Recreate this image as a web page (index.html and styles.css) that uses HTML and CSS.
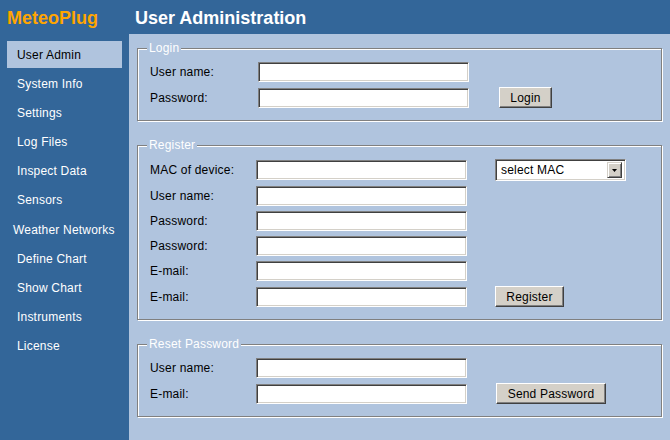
FILE: index.html
```html
<!DOCTYPE html>
<html lang="en">
<head>
<meta charset="utf-8">
<title>MeteoPlug - User Administration</title>
<link rel="stylesheet" href="styles.css">
</head>
<body>
<div class="page">
  <aside class="sidebar">
    <div class="brand">MeteoPlug</div>
    <nav class="nav">
      <a class="nav-item active">User Admin</a>
      <a class="nav-item">System Info</a>
      <a class="nav-item">Settings</a>
      <a class="nav-item">Log Files</a>
      <a class="nav-item">Inspect Data</a>
      <a class="nav-item">Sensors</a>
      <a class="nav-item wide">Weather Networks</a>
      <a class="nav-item">Define Chart</a>
      <a class="nav-item">Show Chart</a>
      <a class="nav-item">Instruments</a>
      <a class="nav-item">License</a>
    </nav>
  </aside>
  <main class="main">
    <header class="topbar"><h1 class="title">User Administration</h1></header>
    <div class="content">
      <fieldset class="box">
        <legend class="box-title">Login</legend>
        <div class="form form-login">
          <span class="lbl">User name:</span><span class="field"></span><span></span>
          <span class="lbl">Password:</span><span class="field"></span><span class="action"><span class="btn btn-login">Login</span></span>
        </div>
      </fieldset>
      <fieldset class="box">
        <legend class="box-title">Register</legend>
        <div class="form form-reg">
          <span class="lbl">MAC of device:</span><span class="field"></span>
          <span class="action"><span class="select"><span class="select-text">select MAC</span><span class="select-btn"><svg width="5" height="3" viewBox="0 0 5 3"><polygon points="0,0 5,0 2.5,3" fill="#000"/></svg></span></span></span>
          <span class="lbl">User name:</span><span class="field"></span><span></span>
          <span class="lbl">Password:</span><span class="field"></span><span></span>
          <span class="lbl">Password:</span><span class="field"></span><span></span>
          <span class="lbl">E-mail:</span><span class="field"></span><span></span>
          <span class="lbl">E-mail:</span><span class="field"></span><span class="action"><span class="btn btn-reg">Register</span></span>
        </div>
      </fieldset>
      <fieldset class="box">
        <legend class="box-title">Reset Password</legend>
        <div class="form form-reset">
          <span class="lbl">User name:</span><span class="field"></span><span></span>
          <span class="lbl">E-mail:</span><span class="field"></span><span class="action"><span class="btn btn-send">Send Password</span></span>
        </div>
      </fieldset>
    </div>
  </main>
</div>
</body>
</html>
```
FILE: styles.css
```css
* { box-sizing: border-box; }
html, body { margin: 0; height: 100%; }
body {
  font-family: "Liberation Sans", Arial, sans-serif;
  font-size: 12px;
  letter-spacing: 0.2px;
  background: #b0c4de;
  color: #000;
}
.page {
  display: grid;
  grid-template-columns: 129px 1fr;
  height: 440px;
  overflow: hidden;
}
.sidebar { background: #336699; }
.brand {
  height: 34px;
  padding: 8px 0 0 7px;
  font-size: 18px;
  font-weight: bold;
  line-height: 21px;
  letter-spacing: 0;
  color: #ffa500;
}
.nav {
  display: flex;
  flex-direction: column;
  gap: 2.1px;
  padding: 7px 7px 0;
}
.nav-item {
  height: 27px;
  padding-top: 2px;
  line-height: 25px;
  padding-left: 10px;
  color: #fff;
  text-decoration: none;
  white-space: nowrap;
}
.nav-item.active { background: #b0c4de; color: #000; }
.nav-item.wide { padding-left: 6px; }

.main { background: #b0c4de; display: flex; flex-direction: column; }
.topbar {
  height: 34px;
  background: #336699;
  padding: 8px 0 0 6px;
}
.title {
  margin: 0;
  font-size: 18px;
  line-height: 21px;
  font-weight: bold;
  letter-spacing: 0;
  color: #fff;
}
.content {
  padding: 6px 8px 0 8px;
  display: flex;
  flex-direction: column;
  gap: 16px;
}
.box {
  margin: 0;
  min-width: 0;
  border: 1px solid #808080;
  box-shadow: 1px 1px 0 #fff, inset 1px 1px 0 #fff;
  padding: 6px 8px 12px 12px;
}
.box-title {
  margin-left: -3px;
  padding: 0 2px;
  line-height: 16px;
  color: #fff;
  background: #b0c4de;
}
.form {
  display: grid;
  grid-template-columns: 108px 211px auto;
  row-gap: 5px;
  align-items: center;
}
.form-reg, .form-reset { grid-template-columns: 106px 211px auto; }
.lbl { white-space: nowrap; }
.field {
  display: block;
  width: 211px;
  height: 20px;
  background: #fff;
  border: 1px solid;
  border-color: #808080 #fff #fff #808080;
  box-shadow: inset 1px 1px 0 #404040, inset -1px -1px 0 #d4d0c8;
}
.action { display: flex; align-items: center; }
.form-login .action { margin-left: 30px; }
.form-reg .action { margin-left: 28px; }
.form-reset .action { margin-left: 29px; }
.btn {
  display: flex;
  align-items: center;
  justify-content: center;
  height: 21px;
  background: #d4d0c8;
  border: 1px solid;
  border-color: #fff #404040 #404040 #fff;
  box-shadow: inset -1px -1px 0 #808080;
  color: #000;
}
.btn-login { width: 53px; }
.btn-reg { width: 69px; }
.btn-send { width: 110px; }
.select {
  display: flex;
  align-items: center;
  justify-content: space-between;
  width: 131px;
  height: 22px;
  background: #fff;
  border: 1px solid;
  border-color: #808080 #fff #fff #808080;
  box-shadow: inset 1px 1px 0 #404040, inset -1px -1px 0 #d4d0c8;
  padding: 0 3px 0 5px;
}
.select-btn {
  display: flex;
  align-items: center;
  justify-content: center;
  width: 15px;
  height: 16px;
  background: #d4d0c8;
  border: 1px solid;
  border-color: #d4d0c8 #404040 #404040 #d4d0c8;
  box-shadow: inset 1px 1px 0 #fff, inset -1px -1px 0 #808080;
}
```
